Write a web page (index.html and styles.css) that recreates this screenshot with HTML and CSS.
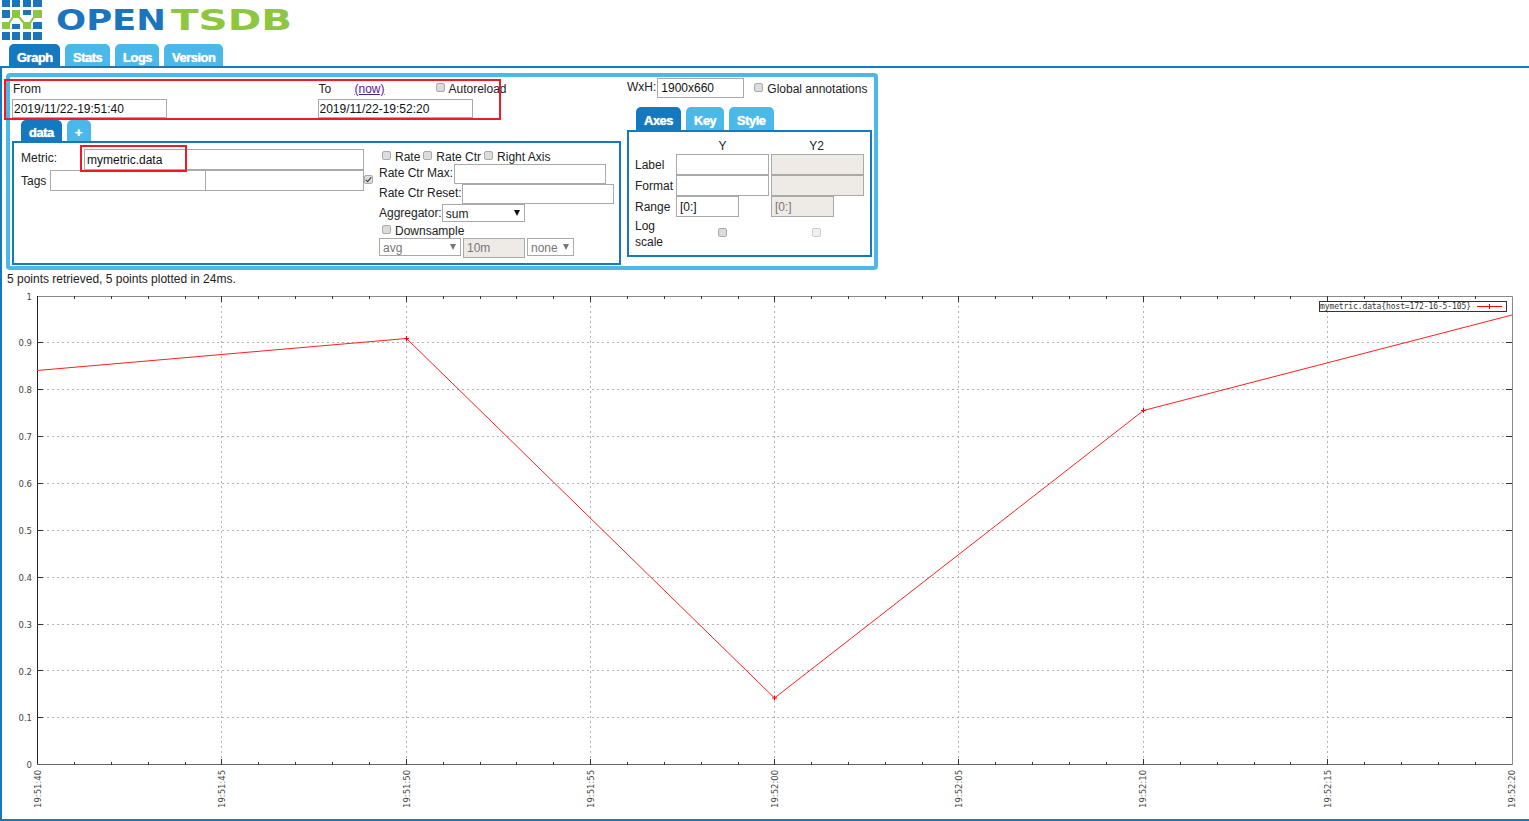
FILE: index.html
```html
<!DOCTYPE html>
<html lang="en">
<head>
<meta charset="utf-8">
<title>OpenTSDB</title>
<link rel="stylesheet" href="styles.css">
</head>
<body>
<header class="logo">
  <svg class="logo-svg" width="300" height="40" viewBox="0 0 300 40">
    <path class="diag" d="M9 23 L13 17 M19 17 L24 23 M30 23 L34 17"/>
    <g class="sq-blue">
      <rect x="2" y="0" width="8" height="7"/><rect x="12" y="0" width="8" height="7"/><rect x="23" y="0" width="8" height="7"/><rect x="33" y="0" width="9" height="7"/>
      <rect x="2" y="10" width="8" height="8"/><rect x="23" y="10" width="8" height="5"/>
      <rect x="12" y="24" width="8" height="5"/><rect x="33" y="22" width="9" height="7"/>
      <rect x="2" y="32" width="8" height="8"/><rect x="12" y="32" width="8" height="8"/><rect x="23" y="32" width="8" height="8"/><rect x="33" y="32" width="9" height="8"/>
    </g>
    <g class="sq-green">
      <rect x="12" y="10" width="8" height="8"/><rect x="33" y="10" width="9" height="8"/>
      <rect x="2" y="22" width="8" height="7"/><rect x="23" y="22" width="8" height="7"/>
    </g>
    <text class="logo-text blue" x="56" y="30" textLength="110" lengthAdjust="spacingAndGlyphs">OPEN</text>
    <text class="logo-text green" x="171" y="30" textLength="121" lengthAdjust="spacingAndGlyphs">TSDB</text>
  </svg>
</header>
<nav class="tabs main-tabs">
  <span class="tab active">Graph</span>
  <span class="tab">Stats</span>
  <span class="tab">Logs</span>
  <span class="tab">Version</span>
</nav>
<main class="page">
  <section class="panel">
    <div class="left">
      <div class="range">
        <div class="range-col from">
          <div class="range-label">From</div>
          <input class="field date" type="text" value="2019/11/22-19:51:40">
        </div>
        <div class="range-col to">
          <div class="range-label"><span class="to-word">To</span><a class="now" href="#">(now)</a><label class="check auto"><input type="checkbox">Autoreload</label></div>
          <input class="field date" type="text" value="2019/11/22-19:52:20">
        </div>
      </div>
      <div class="tabs query-tabs">
        <span class="tab active">data</span>
        <span class="tab">+</span>
      </div>
      <div class="query">
        <div class="q-left">
          <div class="metric-row">
            <span class="metric-label">Metric:</span>
            <input class="field metric" type="text" value="mymetric.data">
          </div>
          <div class="tags-row">
            <span class="tags-label">Tags</span>
            <input class="field tag" type="text">
            <input class="field tag2" type="text">
            <input class="group-check" type="checkbox" checked>
          </div>
        </div>
        <div class="q-right">
          <div class="rate-row">
            <label class="check"><input type="checkbox">Rate</label>
            <label class="check"><input type="checkbox">Rate Ctr</label>
            <label class="check"><input type="checkbox">Right Axis</label>
          </div>
          <div class="inline-row"><span class="max-label">Rate Ctr Max:</span><input class="field rate-input" type="text"></div>
          <div class="inline-row"><span class="reset-label">Rate Ctr Reset:</span><input class="field rate-input" type="text"></div>
          <div class="agg-row"><span>Aggregator:</span><span class="select agg">sum<i class="arrow"></i></span></div>
          <label class="check down"><input type="checkbox">Downsample</label>
          <div class="down-row">
            <span class="select off avg">avg<i class="arrow"></i></span>
            <input class="field off ten" type="text" value="10m" disabled>
            <span class="select off none">none<i class="arrow"></i></span>
          </div>
        </div>
      </div>
    </div>
    <div class="right">
      <div class="size-row">
        <span class="wxh-label">WxH:</span><input class="field wxh" type="text" value="1900x660">
        <label class="check global"><input type="checkbox">Global annotations</label>
      </div>
      <div class="tabs axes-tabs">
        <span class="tab active">Axes</span>
        <span class="tab">Key</span>
        <span class="tab">Style</span>
      </div>
      <div class="axes">
        <span></span><span class="head">Y</span><span class="head">Y2</span>
        <span>Label</span><input class="field wide" type="text"><input class="field wide off" type="text" disabled>
        <span>Format</span><input class="field wide" type="text"><input class="field wide off" type="text" disabled>
        <span>Range</span><input class="field short" type="text" value="[0:]"><input class="field short off" type="text" value="[0:]" disabled>
        <span class="log">Log<br>scale</span><span class="cell"><input type="checkbox"></span><span class="cell"><input class="faded" type="checkbox" disabled></span>
      </div>
    </div>
  </section>
  <p class="status">5 points retrieved, 5 points plotted in 24ms.</p>
  <svg class="chart" width="1527" height="531" viewBox="2 288 1527 531">
    <path class="grid" d="M37 717.5H1512M37 670.5H1512M37 624.5H1512M37 577.5H1512M37 530.5H1512M37 483.5H1512M37 436.5H1512M37 389.5H1512M37 342.5H1512M221.5 296V765M406.5 296V765M590.5 296V765M774.5 296V765M958.5 296V765M1143.5 296V765M1327.5 296V765"/>
    <path class="frame-top" d="M37 296.5H1512.5V765"/>
    <path class="frame" d="M37.5 296V765"/>
    <path class="frame-bottom" d="M37 764.5H1512"/>
    <path class="ticks" d="M74.5 765v-3M111.5 765v-3M148.5 765v-3M185.5 765v-3M221.5 765v-6M258.5 765v-3M295.5 765v-3M332.5 765v-3M369.5 765v-3M406.5 765v-6M443.5 765v-3M480.5 765v-3M516.5 765v-3M553.5 765v-3M590.5 765v-6M627.5 765v-3M664.5 765v-3M701.5 765v-3M738.5 765v-3M774.5 765v-6M811.5 765v-3M848.5 765v-3M885.5 765v-3M922.5 765v-3M958.5 765v-6M995.5 765v-3M1032.5 765v-3M1069.5 765v-3M1106.5 765v-3M1143.5 765v-6M1180.5 765v-3M1217.5 765v-3M1254.5 765v-3M1290.5 765v-3M1327.5 765v-6M1364.5 765v-3M1401.5 765v-3M1438.5 765v-3M1475.5 765v-3
      M74.5 296v3M111.5 296v3M148.5 296v3M185.5 296v3M221.5 296v6M258.5 296v3M295.5 296v3M332.5 296v3M369.5 296v3M406.5 296v6M443.5 296v3M480.5 296v3M516.5 296v3M553.5 296v3M590.5 296v6M627.5 296v3M664.5 296v3M701.5 296v3M738.5 296v3M774.5 296v6M811.5 296v3M848.5 296v3M885.5 296v3M922.5 296v3M958.5 296v6M995.5 296v3M1032.5 296v3M1069.5 296v3M1106.5 296v3M1143.5 296v6M1180.5 296v3M1217.5 296v3M1254.5 296v3M1290.5 296v3M1327.5 296v6M1364.5 296v3M1401.5 296v3M1438.5 296v3M1475.5 296v3
      M37 717.5h6M37 670.5h6M37 624.5h6M37 577.5h6M37 530.5h6M37 483.5h6M37 436.5h6M37 389.5h6M37 342.5h6
      M1512 717.5h-6M1512 670.5h-6M1512 624.5h-6M1512 577.5h-6M1512 530.5h-6M1512 483.5h-6M1512 436.5h-6M1512 389.5h-6M1512 342.5h-6"/>
    <g class="ylabels">
      <text x="32" y="300">1</text><text x="32" y="346">0.9</text><text x="32" y="393">0.8</text><text x="32" y="440">0.7</text><text x="32" y="487">0.6</text><text x="32" y="534">0.5</text><text x="32" y="581">0.4</text><text x="32" y="628">0.3</text><text x="32" y="675">0.2</text><text x="32" y="721">0.1</text><text x="32" y="768">0</text>
    </g>
    <g class="xlabels">
      <text transform="translate(41 808) rotate(-90)">19:51:40</text>
      <text transform="translate(225 808) rotate(-90)">19:51:45</text>
      <text transform="translate(410 808) rotate(-90)">19:51:50</text>
      <text transform="translate(594 808) rotate(-90)">19:51:55</text>
      <text transform="translate(778 808) rotate(-90)">19:52:00</text>
      <text transform="translate(962 808) rotate(-90)">19:52:05</text>
      <text transform="translate(1146 808) rotate(-90)">19:52:10</text>
      <text transform="translate(1331 808) rotate(-90)">19:52:15</text>
      <text transform="translate(1515 808) rotate(-90)">19:52:20</text>
    </g>
    <polyline class="series" points="37,370.5 406.5,338.5 774.5,698 1143.5,410.5 1512,315"/>
    <path class="marks" d="M404 338.5h5M406.5 336v5M772 698h5M774.5 695.5v5M1141 410.5h5M1143.5 408v5"/>
    <rect class="legend-box" x="1319.5" y="301.5" width="187" height="10"/>
    <text class="legend-text" x="1320" y="309" textLength="151">mymetric.data{host=172-16-5-105}</text>
    <path class="marks" d="M1477 306.5h25M1489.5 304v5"/>
  </svg>
</main>
<div class="mark mark-range"></div>
<div class="mark mark-metric"></div>
</body>
</html>
```

FILE: styles.css
```css
html, body { margin: 0; padding: 0; height: 821px; overflow: hidden; background: #fff; }
body { font: 12px/14px "Liberation Sans", Arial, sans-serif; color: #222; position: relative; }
.logo { height: 44px; }
.logo-svg { display: block; }
.logo-text { font: bold 29px "DejaVu Sans", sans-serif; }
.logo-text.blue { fill: #1b75bc; }
.logo-text.green { fill: #8dc63f; }
.sq-blue { fill: #1b75bc; }
.sq-green { fill: #8dc63f; }
.diag { fill: none; stroke: #8dc63f; stroke-width: 2; }

.tabs { display: flex; gap: 5px; }
.tab {
  display: block; height: 22px; padding: 0 8px; border-radius: 5px 5px 0 0;
  background: #4ab9e9; color: #fff; font: bold 13px/27px "Liberation Sans", Arial, sans-serif;
  letter-spacing: -0.5px; text-shadow: 0 0 1px #fff;
}
.tab.active { background: #1579bf; }
.main-tabs { padding-left: 9px; height: 22px; }
.main-tabs .tab:nth-child(1) { width: 35px; }
.main-tabs .tab:nth-child(2) { width: 29px; }
.main-tabs .tab:nth-child(3) { width: 28px; }
.main-tabs .tab:nth-child(4) { width: 43px; }

.page {
  height: 755px; border: 2px solid #1579bf; border-right: 0;
  padding-top: 5px; box-sizing: border-box;
}
.panel {
  display: flex; width: 864px; height: 189px; margin-left: 4px;
  border: 4px solid #4ab9e9; border-radius: 4px;
}
.left { width: 611px; margin-left: 2px; }
.range { display: flex; height: 43px; }
.range-col { width: 306px; padding-top: 5px; }
.range-label { height: 17px; padding-left: 1px; display: flex; }
.to-word { width: 36px; }
.now { color: #551a8b; width: 81px; }
.field {
  box-sizing: border-box; display: block; margin: 0; padding: 0 1px;
  border: 1px solid #a9a9a9; border-radius: 0; background: #fff;
  font: 12px "Liberation Sans", Arial, sans-serif; color: #111; outline: 0;
}
.field.off { background: #eeebe7; color: #777; }
.date { width: 155px; height: 19px; }

.check { display: inline-flex; align-items: flex-start; }
input[type="checkbox"] {
  appearance: none; -webkit-appearance: none; box-sizing: border-box;
  width: 9px; height: 9px; margin: 1px 4px 0 0; flex: none;
  border: 1px solid #aaa; border-radius: 2px; background: #dcdcdc;
}
input[type="checkbox"].faded { background: #f0f0f0; border-color: #ccc; }
.group-check:checked { background: #ddd; position: relative; }
.group-check:checked::after {
  content: ""; position: absolute; left: 2px; top: 0; width: 2px; height: 5px;
  border: solid #333; border-width: 0 1px 1px 0; transform: rotate(40deg);
}

.query-tabs { padding-left: 9px; height: 21px; }
.query-tabs .tab { height: 21px; line-height: 25px; }
.query-tabs .tab:nth-child(1) { width: 25px; }
.query-tabs .tab:nth-child(2) { width: 8px; }
.query {
  box-sizing: border-box; display: flex; width: 609px; height: 124px;
  border: 2px solid #1579bf;
}
.q-left { width: 365px; padding: 6px 0 0 7px; box-sizing: border-box; }
.metric-row { display: flex; height: 21px; }
.metric-label { width: 63px; padding-top: 2px; }
.metric { width: 280px; height: 21px; padding-left: 2px; }
.tags-row { display: flex; height: 21px; }
.tags-label { width: 29px; padding-top: 4px; }
.tag { width: 156px; height: 21px; }
.tag2 { width: 158px; height: 21px; border-left: 0; }
.group-check { margin: 5px 0 0 0 !important; }

.q-right { padding: 7px 0 0 0; width: 240px; }
.rate-row { display: flex; gap: 3px; height: 14px; padding-left: 3px; }
.rate-row .check input { margin-top: 1px; }
.inline-row { display: flex; height: 20px; }
.inline-row span { padding-top: 2px; }
.max-label { width: 75px; }
.reset-label { width: 83px; }
.rate-input { width: 152px; height: 20px; }
.agg-row { display: flex; height: 19px; }
.agg-row > span:first-child { padding-top: 2px; }
.select {
  box-sizing: border-box; display: flex; justify-content: space-between; align-items: center;
  height: 18px; padding: 1px 4px 0 3px; border: 1px solid #a9a9a9; margin-left: 1px;
}
.arrow { display: block; width: 0; height: 0; margin-top: -2px; border: 3.5px solid transparent; border-top: 6px solid #111; border-bottom: 0; }
.agg { width: 83px; margin-left: 0; }
.down { height: 14px; padding-left: 3px; }
.down input { margin-top: 1px !important; margin-right: 4px; }
.down-row { display: flex; }
.select.off { color: #777; margin-left: 0; }
.select.off .arrow { border-top-color: #777; }
.avg { width: 82px; }
.ten { width: 62px; height: 20px; margin: 0 2px; padding-left: 3px; }
.none { width: 47px; }

.right { width: 245px; margin-left: 4px; }
.size-row { display: flex; height: 30px; padding-top: 1px; box-sizing: border-box; align-items: flex-start; }
.wxh-label { padding-top: 2px; }
.wxh { width: 87px; height: 20px; padding-left: 3px; margin-left: 1px; }
.global { margin: 4px 0 0 10px; }
.global input { margin-right: 4px; }
.axes-tabs { padding-left: 9px; height: 23px; }
.axes-tabs .tab { height: 23px; line-height: 27px; }
.axes-tabs .tab:nth-child(1) { width: 29px; }
.axes-tabs .tab:nth-child(2) { width: 22px; }
.axes-tabs .tab:nth-child(3) { width: 29px; }
.axes {
  box-sizing: border-box; width: 245px; height: 127px; padding: 6px 0 0 6px;
  border: 2px solid #1579bf; display: grid;
  grid-template-columns: 41px 95px 93px; grid-auto-rows: min-content; align-items: center;
}
.head { text-align: center; height: 16px; padding: 1px 2px 0 0; box-sizing: border-box; }
.wide { width: 93px; height: 21px; }
.short { width: 63px; height: 21px; padding-left: 3px; }
.log { line-height: 16px; padding-top: 1px; }
.cell { text-align: center; padding: 0 2px 2px 0; }
.cell input { margin: 0 !important; }

.status { margin: 0; height: 18px; padding: 2px 0 0 5px; box-sizing: border-box; }
.chart { display: block; }
.grid { fill: none; stroke: #b5b5b5; stroke-width: 1; stroke-dasharray: 2 3; }
.frame { fill: none; stroke: #222; }
.frame-top { fill: none; stroke: #8a8a8a; }
.frame-bottom { fill: none; stroke: #666; }
.ticks { fill: none; stroke: #333; }
.ylabels text { font: 8.5px "DejaVu Sans", sans-serif; fill: #444; text-anchor: end; }
.xlabels text { font: 8.5px "DejaVu Sans", sans-serif; fill: #444; }
.series { fill: none; stroke: #ff2020; stroke-width: 1; }
.marks { fill: none; stroke: #ff0000; }
.legend-box { fill: #fff; stroke: #333; }
.legend-text { font: 8px "DejaVu Sans Mono", monospace; fill: #333; }

.mark { position: absolute; box-sizing: border-box; border: 2px solid #ed1c24; }
.mark-range { left: 4px; top: 79px; width: 497px; height: 41px; }
.mark-metric { left: 80px; top: 145px; width: 107px; height: 27px; }
```
